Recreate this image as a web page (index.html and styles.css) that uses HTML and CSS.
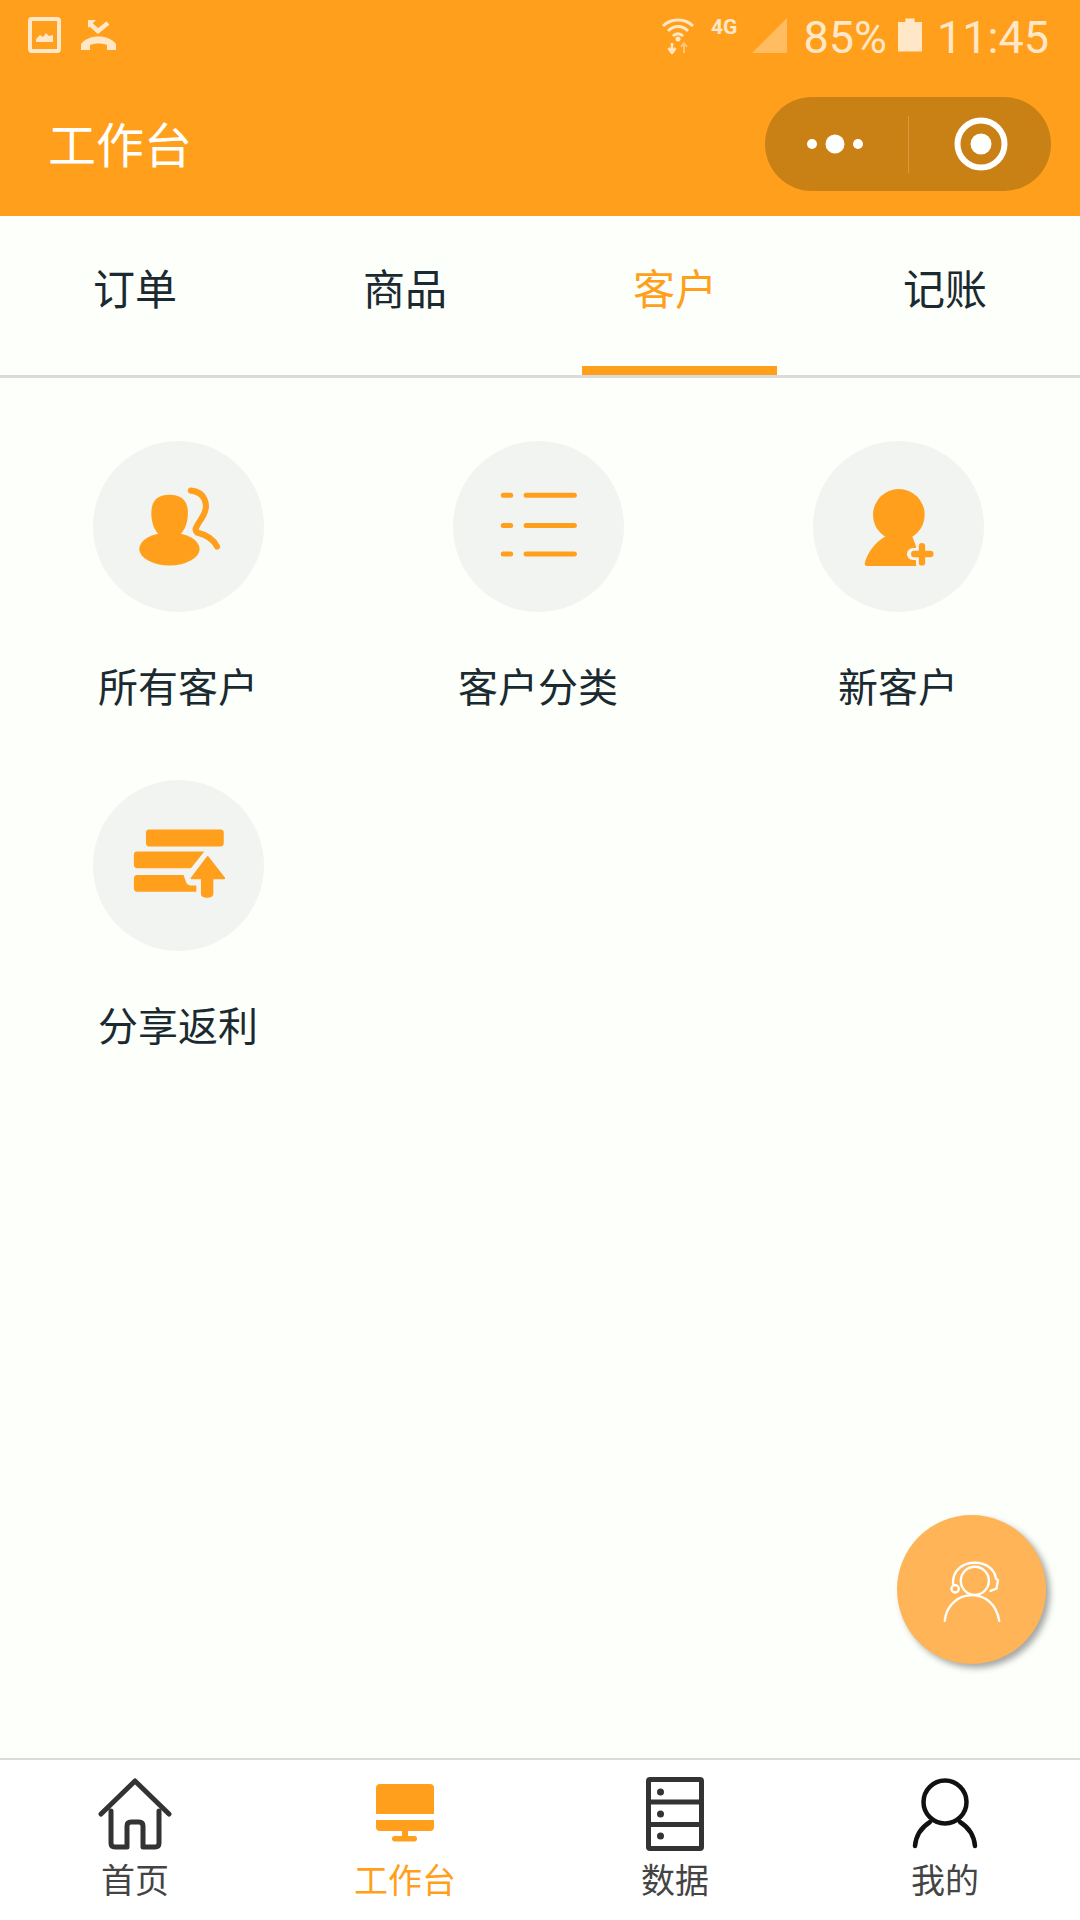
FILE: index.html
```html
<!DOCTYPE html>
<html>
  <head>
    <meta charset="utf-8">
    <title>工作台</title>
    <link rel="stylesheet" href="styles.css">
  </head>
  <body>
    <div class="page">
      <header class="header">
        <div class="status">
          <div class="status-left">
            <svg class="ic-image" viewBox="0 0 33 36">
              <rect x="2" y="2" width="29" height="32" rx="2" fill="none" stroke="currentColor" stroke-width="4"/>
              <path d="M8 25 V22 L12 18 L15 20 L18 16 L21 19 L25 18 V25 Z" fill="currentColor"/>
            </svg>
            <svg class="ic-call" viewBox="0 0 35 31">
              <path d="M9 5 L17 12 L27 4" fill="none" stroke="currentColor" stroke-width="4.500"/>
              <path d="M7 1 L15 1 L7 9 Z" fill="currentColor"/>
              <path d="M0 31 V25 C7 15 28 15 35 25 V31 H26 V26 C21 24 14 24 9 26 V31 Z" fill="currentColor"/>
            </svg>
          </div>
          <div class="status-right">
            <svg class="ic-wifi" viewBox="0 0 32 37">
              <g fill="none" stroke="currentColor" stroke-width="3">
                <path d="M1 9 C9 1 23 1 31 9"/>
                <path d="M6 14 C12 8 20 8 26 14"/>
                <path d="M11 19 C14 16 18 16 21 19"/>
              </g>
              <circle cx="16" cy="22" r="2.5" fill="currentColor"/>
              <path d="M10 26 V33 M6.500 31 L10 36 L13.500 31" fill="none" stroke="currentColor" stroke-width="2.500"/>
              <path d="M22 36 V28 M19 30 L22 26 L25 30" fill="none" stroke="currentColor" stroke-width="2" opacity="0.5"/>
            </svg>
            <span class="net">4G</span>
            <svg class="ic-signal" viewBox="0 0 35 35">
              <path d="M35 0 V35 H0 Z" fill="#ffffff" fill-opacity="0.3"/>
            </svg>
            <span class="status-text">85%</span>
            <svg class="ic-battery" viewBox="0 0 26 36">
              <path d="M8 0 H18 V4 H26 V36 H0 V4 H8 Z" fill="currentColor"/>
            </svg>
            <span class="status-text time">11:45</span>
          </div>
        </div>
        <div class="titlebar">
          <div class="title">工作台</div>
          <div class="capsule">
            <div class="capsule-half">
              <svg class="ic-dots" viewBox="0 0 56 20">
                <circle cx="5" cy="10" r="5" fill="#fff"/>
                <circle cx="28" cy="10" r="9.500" fill="#fff"/>
                <circle cx="51" cy="10" r="5" fill="#fff"/>
              </svg>
            </div>
            <div class="capsule-line"></div>
            <div class="capsule-half">
              <svg class="ic-target" viewBox="0 0 54 54">
                <circle cx="27" cy="27" r="23.500" fill="none" stroke="#fff" stroke-width="6"/>
                <circle cx="27" cy="27" r="10.500" fill="#fff"/>
              </svg>
            </div>
          </div>
        </div>
      </header>

      <nav class="tabs">
        <div class="tab">订单</div>
        <div class="tab">商品</div>
        <div class="tab tab-active">客户</div>
        <div class="tab">记账</div>
      </nav>

      <main class="main">
        <div class="grid">
          <div class="item">
            <div class="item-circle">
              <svg viewBox="40 30 510 510">
                <g fill="#ff9f1c">
                  <path d="M268 190 C305 190 323 208 323 245 C323 285 305 320 268 320 C231 320 214 285 214 245 C214 208 231 190 268 190 Z"/>
                  <ellipse cx="268" cy="352" rx="90" ry="49"/>
                </g>
                <path d="M332 178 C375 182 385 220 370 250 C355 278 338 292 350 303 C380 310 400 325 410 345" fill="none" stroke="#ff9f1c" stroke-width="18" stroke-linecap="round"/>
              </svg>
            </div>
            <div class="item-label">所有客户</div>
          </div>
          <div class="item">
            <div class="item-circle">
              <svg viewBox="40 30 510 510">
                <g fill="none" stroke="#ff9f1c" stroke-width="15" stroke-linecap="round">
                  <path d="M190 192 H212 M258 192 H402"/>
                  <path d="M190 282 H212 M258 282 H402"/>
                  <path d="M190 367 H212 M258 367 H402"/>
                </g>
              </svg>
            </div>
            <div class="item-label">客户分类</div>
          </div>
          <div class="item">
            <div class="item-circle">
              <svg viewBox="40 30 510 510">
                <circle cx="296" cy="250" r="77" fill="#ff9f1c"/>
                <path d="M202 403 Q190 403 197 385 C210 350 235 325 262 312 L335 312 L370 403 Z" fill="#ff9f1c"/>
                <path d="M338 367 H392 M365 340 V396" fill="none" stroke="#f2f4f1" stroke-width="36" stroke-linecap="round"/>
                <path d="M342 367 H390 M365 344 V392" fill="none" stroke="#ff9f1c" stroke-width="19" stroke-linecap="round"/>
              </svg>
            </div>
            <div class="item-label">新客户</div>
          </div>
          <div class="item">
            <div class="item-circle">
              <svg viewBox="40 30 510 510">
                <g fill="#ff9f1c">
                  <rect x="198" y="178" width="232" height="50" rx="10"/>
                  <path d="M172 243 H372 L332 293 H172 Q162 293 162 283 V253 Q162 243 172 243 Z"/>
                  <path d="M172 313 H310 L318 336 Q322 345 332 345 H348 V363 H172 Q162 363 162 353 V323 Q162 313 172 313 Z"/>
                </g>
                <path d="M382 260 L431 323 H396 V370 Q396 378 380 378 Q365 378 365 370 V323 H334 Z" fill="#ff9f1c" stroke="#ff9f1c" stroke-width="6" stroke-linejoin="round"/>
              </svg>
            </div>
            <div class="item-label">分享返利</div>
          </div>
        </div>

        <div class="fab">
          <svg viewBox="82 75 446 446">
            <g fill="none" stroke="#fff" stroke-width="7" stroke-linecap="round">
              <circle cx="315" cy="272" r="42"/>
              <path d="M250 285 C245 240 280 218 315 218 C352 218 375 240 378 265 L384 270 L380 295 L362 302"/>
              <circle cx="256" cy="296" r="11"/>
              <path d="M225 392 C230 340 270 315 305 315 C345 315 380 340 388 392"/>
            </g>
          </svg>
        </div>
      </main>

      <footer class="nav">
        <div class="nav-item">
          <svg viewBox="0 0 80 80">
            <g fill="none" stroke="#333" stroke-width="5" stroke-linecap="round" stroke-linejoin="round">
              <path d="M6 39 L40 6 L74 39"/>
              <path d="M16 36 V68 Q16 72 20 72 H32 V51 Q32 47 36 47 H44 Q48 47 48 51 V72 H60 Q64 72 64 68 V36"/>
            </g>
          </svg>
          <div class="nav-label">首页</div>
        </div>
        <div class="nav-item nav-active">
          <svg viewBox="0 0 80 80">
            <g fill="#ff9f1c">
              <path d="M15 9 H65 Q69 9 69 13 V39 H11 V13 Q11 9 15 9 Z"/>
              <path d="M11 45 H69 V52 Q69 56 65 56 H15 Q11 56 11 52 Z"/>
              <rect x="37" y="56" width="6" height="7"/>
              <rect x="27" y="61" width="25" height="5.500" rx="2.700"/>
            </g>
          </svg>
          <div class="nav-label">工作台</div>
        </div>
        <div class="nav-item">
          <svg viewBox="0 0 80 80">
            <rect x="13.500" y="4.500" width="53" height="69" rx="1.500" fill="none" stroke="#333" stroke-width="5"/>
            <path d="M13 27 H67 M13 49.500 H67" stroke="#333" stroke-width="5"/>
            <g fill="#333">
              <circle cx="25.500" cy="17" r="3.500"/>
              <circle cx="25.500" cy="39" r="3.500"/>
              <circle cx="25.500" cy="61" r="3.500"/>
            </g>
          </svg>
          <div class="nav-label">数据</div>
        </div>
        <div class="nav-item">
          <svg viewBox="0 0 80 80">
            <g fill="none" stroke="#111" stroke-width="4.500" stroke-linecap="round">
              <circle cx="40" cy="27" r="21.500"/>
              <path d="M10 71 C11 60 17 52 25 47"/>
              <path d="M70 71 C69 60 63 52 55 47"/>
            </g>
          </svg>
          <div class="nav-label">我的</div>
        </div>
      </footer>
    </div>
  </body>
</html>
```

FILE: styles.css
```css
* {
  box-sizing: border-box;
}
body {
  margin: 0;
  background: #fdfffb;
  font-family: "Noto Sans CJK SC", "Noto Sans", sans-serif;
}
svg {
  display: block;
}
.page {
  display: flex;
  flex-direction: column;
  width: 1080px;
  height: 1920px;
  overflow: hidden;
}

/* orange header */
.header {
  height: 216px;
  background: #ff9f1c;
  color: #fff;
}
.status {
  display: flex;
  justify-content: space-between;
  height: 72px;
  padding: 17px 31px 0 28px;
  color: #ffe7c8;
}
.status-left {
  display: flex;
  gap: 20px;
}
.ic-image {
  width: 33px;
  height: 36px;
}
.ic-call {
  width: 35px;
  height: 31px;
  margin-top: 2px;
}
.status-right {
  display: flex;
  align-items: flex-start;
  height: 37px;
}
.ic-wifi {
  width: 32px;
  height: 37px;
}
.net {
  margin: 0 15px 0 17px;
  font-family: Roboto, sans-serif;
  font-size: 21px;
  font-weight: 700;
  line-height: 20px;
}
.ic-signal {
  width: 35px;
  height: 35px;
  margin-top: 1px;
}
.status-text {
  margin-left: 16px;
  font-family: Roboto, sans-serif;
  font-size: 45px;
  line-height: 41px;
}
.ic-battery {
  width: 24px;
  height: 36px;
  margin-left: 11px;
}
.time {
  margin-left: 15px;
}
.titlebar {
  display: flex;
  justify-content: space-between;
  align-items: center;
  height: 144px;
  padding: 0 29px 0 48px;
}
.title {
  margin-top: -5px;
  font-size: 48px;
}
.capsule {
  display: flex;
  align-items: center;
  width: 286px;
  height: 94px;
  border-radius: 47px;
  background: #c98014;
}
.capsule-half {
  display: flex;
  flex: 1;
  justify-content: center;
}
.capsule-line {
  width: 1px;
  height: 57px;
  background: #dc9a3c;
}
.ic-dots {
  width: 56px;
  height: 20px;
  margin-left: -2px;
}
.ic-target {
  width: 54px;
  height: 54px;
  margin-left: 3px;
}

/* tabs */
.tabs {
  display: grid;
  grid-template-columns: repeat(4, 1fr);
  height: 162px;
  border-bottom: 3px solid #d9dbd6;
}
.tab {
  position: relative;
  padding-top: 41px;
  color: #1b2a30;
  font-size: 42px;
  line-height: 60px;
  text-align: center;
}
.tab-active {
  color: #ff9f1c;
}
.tab-active::after {
  content: "";
  position: absolute;
  left: 42px;
  bottom: 0;
  width: 195px;
  height: 9px;
  background: #ff9f1c;
}

/* entry grid */
.main {
  position: relative;
  flex: 1;
  padding-top: 63px;
}
.grid {
  display: grid;
  grid-template-columns: repeat(3, 360px);
  row-gap: 70px;
  margin-left: -2px;
}
.item {
  display: flex;
  flex-direction: column;
  align-items: center;
}
.item-circle {
  width: 171px;
  height: 171px;
  border-radius: 50%;
  background: #f2f4f1;
}
.item-label {
  margin-top: 48px;
  color: #1b2a30;
  font-size: 40px;
  line-height: 50px;
}
.fab {
  position: absolute;
  right: 34px;
  bottom: 94px;
  width: 149px;
  height: 149px;
  border-radius: 50%;
  background: #ffb557;
  box-shadow: 4px 4px 6px rgba(60, 60, 60, 0.45);
}

/* bottom bar */
.nav {
  display: grid;
  grid-template-columns: repeat(4, 1fr);
  height: 162px;
  padding-top: 15px;
  border-top: 2px solid #d8dbd8;
  background: #fff;
}
.nav-item {
  display: flex;
  flex-direction: column;
  align-items: center;
}
.nav-item svg {
  width: 80px;
  height: 80px;
}
.nav-label {
  margin-top: 1px;
  color: #444;
  font-size: 34px;
  line-height: 46px;
}
.nav-active .nav-label {
  color: #ff9f1c;
}
```
